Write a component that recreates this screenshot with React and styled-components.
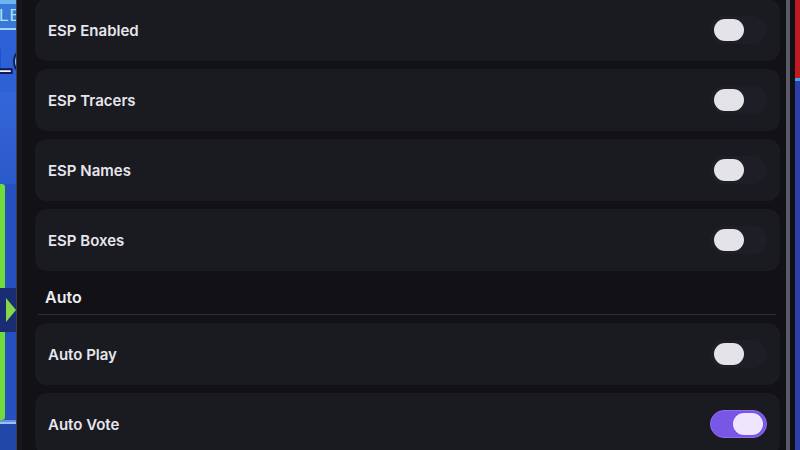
import styled, { createGlobalStyle } from 'styled-components'

const GlobalStyle = createGlobalStyle`
    html, body {
        margin: 0;
        padding: 0;
        background: #0d0d12;
    }
    #root {
        width: 800px;
        height: 450px;
        overflow: hidden;
    }
`

const sections = [
    {
        title: null,
        items: [
            { label: 'ESP Enabled', on: false },
            { label: 'ESP Tracers', on: false },
            { label: 'ESP Names', on: false },
            { label: 'ESP Boxes', on: false },
        ],
    },
    {
        title: 'Auto',
        items: [
            { label: 'Auto Play', on: false },
            { label: 'Auto Vote', on: true },
        ],
    },
]

export default function App() {
    return (
        <>
            <GlobalStyle />
            <Screen>
                {/* game behind the menu, left edge */}
                <GameLeft>
                    <SkyBand />
                    <SignBand><SignText>LE</SignText></SignBand>
                    <LogoBand><LogoText>LC</LogoText></LogoBand>
                    <BlueBand $h={92} />
                    <GreenBand>
                        <GreenBar />
                        <NavyStrip><Arrow /></NavyStrip>
                    </GreenBand>
                    <BottomBand />
                </GameLeft>
                <EdgeLeft />
                <Panel>
                    <List>
                        {sections.map((s, i) => (
                            <Section key={i}>
                                {s.title && (
                                    <SectionHead>
                                        <SectionTitle>{s.title}</SectionTitle>
                                        <Divider />
                                    </SectionHead>
                                )}
                                {s.items.map((it) => (
                                    <Row key={it.label}>
                                        <Label>{it.label}</Label>
                                        <Track $on={it.on}>
                                            <Knob $on={it.on} />
                                        </Track>
                                    </Row>
                                ))}
                            </Section>
                        ))}
                    </List>
                </Panel>
                <ScrollEdge />
                <GameRight>
                    <RedBand />
                    <BlueRight />
                </GameRight>
            </Screen>
        </>
    )
}

const Screen = styled.div`
    display: flex;
    width: 800px;
    height: 450px;
    background: #0e0e13;
    font-family: Inter, "Noto Sans", "Liberation Sans", sans-serif;
`

const GameLeft = styled.div`
    width: 16px;
    display: flex;
    flex-direction: column;
    overflow: hidden;
    background: #2c5fd4;
`

const SkyBand = styled.div`
    height: 4px;
    background: #6fb6f0;
`

const SignBand = styled.div`
    height: 24px;
    background: #3a78d8;
    border-bottom: 2px solid #9fd6f5;
    display: flex;
    align-items: center;
    overflow: hidden;
`

const SignText = styled.span`
    font-family: "Liberation Sans", sans-serif;
    font-size: 17px;
    color: #a7e4f5;
    letter-spacing: 1px;
    margin-left: -1px;
`

const LogoBand = styled.div`
    height: 62px;
    background: #2f61d6;
    display: flex;
    align-items: center;
    overflow: hidden;
`

const LogoText = styled.span`
    font-family: "Liberation Sans", sans-serif;
    font-weight: 900;
    font-size: 34px;
    color: #f4f6ff;
    -webkit-text-stroke: 2px #0f1a55;
    margin-left: -8px;
`

const BlueBand = styled.div`
    height: ${(p) => p.$h}px;
    background: linear-gradient(#3566d9, #2a59c9);
`

const GreenBand = styled.div`
    height: 236px;
    position: relative;
    background: #2550bd;
`

const GreenBar = styled.div`
    position: absolute;
    left: 0;
    top: 0;
    bottom: 0;
    width: 5px;
    background: #6fdc3c;
    border-radius: 0 3px 3px 0;
`

const NavyStrip = styled.div`
    position: absolute;
    left: 0;
    right: 0;
    top: 104px;
    height: 44px;
    background: #1a2d73;
    display: flex;
    align-items: center;
    justify-content: flex-end;
`

const Arrow = styled.div`
    width: 0;
    height: 0;
    border-top: 12px solid transparent;
    border-bottom: 12px solid transparent;
    border-left: 10px solid #86d84a;
    margin-right: 0;
`

const BottomBand = styled.div`
    flex: 1;
    background: #2148a8;
    border-top: 2px solid #6b8fe0;
    box-shadow: inset 0 14px 0 -12px #9cc0f4;
`

const EdgeLeft = styled.div`
    width: 5px;
    background: #16161c;
    border-left: 1px solid #3b3d4a;
`

const Panel = styled.div`
    flex: 1;
    background: #111116;
    padding: 0 6px 0 13px;
    overflow: hidden;
`

const List = styled.div`
    display: flex;
    flex-direction: column;
    gap: 8px;
    margin-top: -1px;
`

const Section = styled.div`
    display: flex;
    flex-direction: column;
    gap: 8px;
`

const SectionHead = styled.div`
    display: flex;
    flex-direction: column;
`

const SectionTitle = styled.div`
    padding: 8px 0 7px 10px;
    font-size: 16px;
    line-height: 20px;
    font-weight: 600;
    color: #ececf2;
`

const Divider = styled.div`
    height: 1px;
    margin: 0 4px 0 3px;
    background: #2f2f37;
`

const Row = styled.div`
    height: 62px;
    display: flex;
    align-items: center;
    justify-content: space-between;
    padding: 0 13px;
    border-radius: 12px;
    background: #1a1a21;
`

const Label = styled.span`
    font-size: 15px;
    font-weight: 600;
    color: #e6e6ec;
`

const Track = styled.div`
    width: 57px;
    height: 28px;
    box-sizing: border-box;
    border-radius: 14px;
    display: flex;
    align-items: center;
    padding: 0 3px;
    justify-content: ${(p) => (p.$on ? 'flex-end' : 'flex-start')};
    background: ${(p) => (p.$on ? '#7856e6' : '#1e1e26')};
    border: 1px solid ${(p) => (p.$on ? '#8d6ff0' : '#1e1e26')};
`

const Knob = styled.div`
    width: 30px;
    height: 22px;
    border-radius: 11px;
    background: ${(p) => (p.$on ? '#eee6fc' : '#e3e3e8')};
`

const ScrollEdge = styled.div`
    width: 9px;
    background: #0f0f14;
    border-left: 4px solid #585a66;
    box-sizing: border-box;
`

const GameRight = styled.div`
    width: 5px;
    display: flex;
    flex-direction: column;
`

const RedBand = styled.div`
    height: 78px;
    background: #c01a22;
    border-bottom: 3px solid #4a9ef0;
`

const BlueRight = styled.div`
    flex: 1;
    background: #2b3fa6;
`
